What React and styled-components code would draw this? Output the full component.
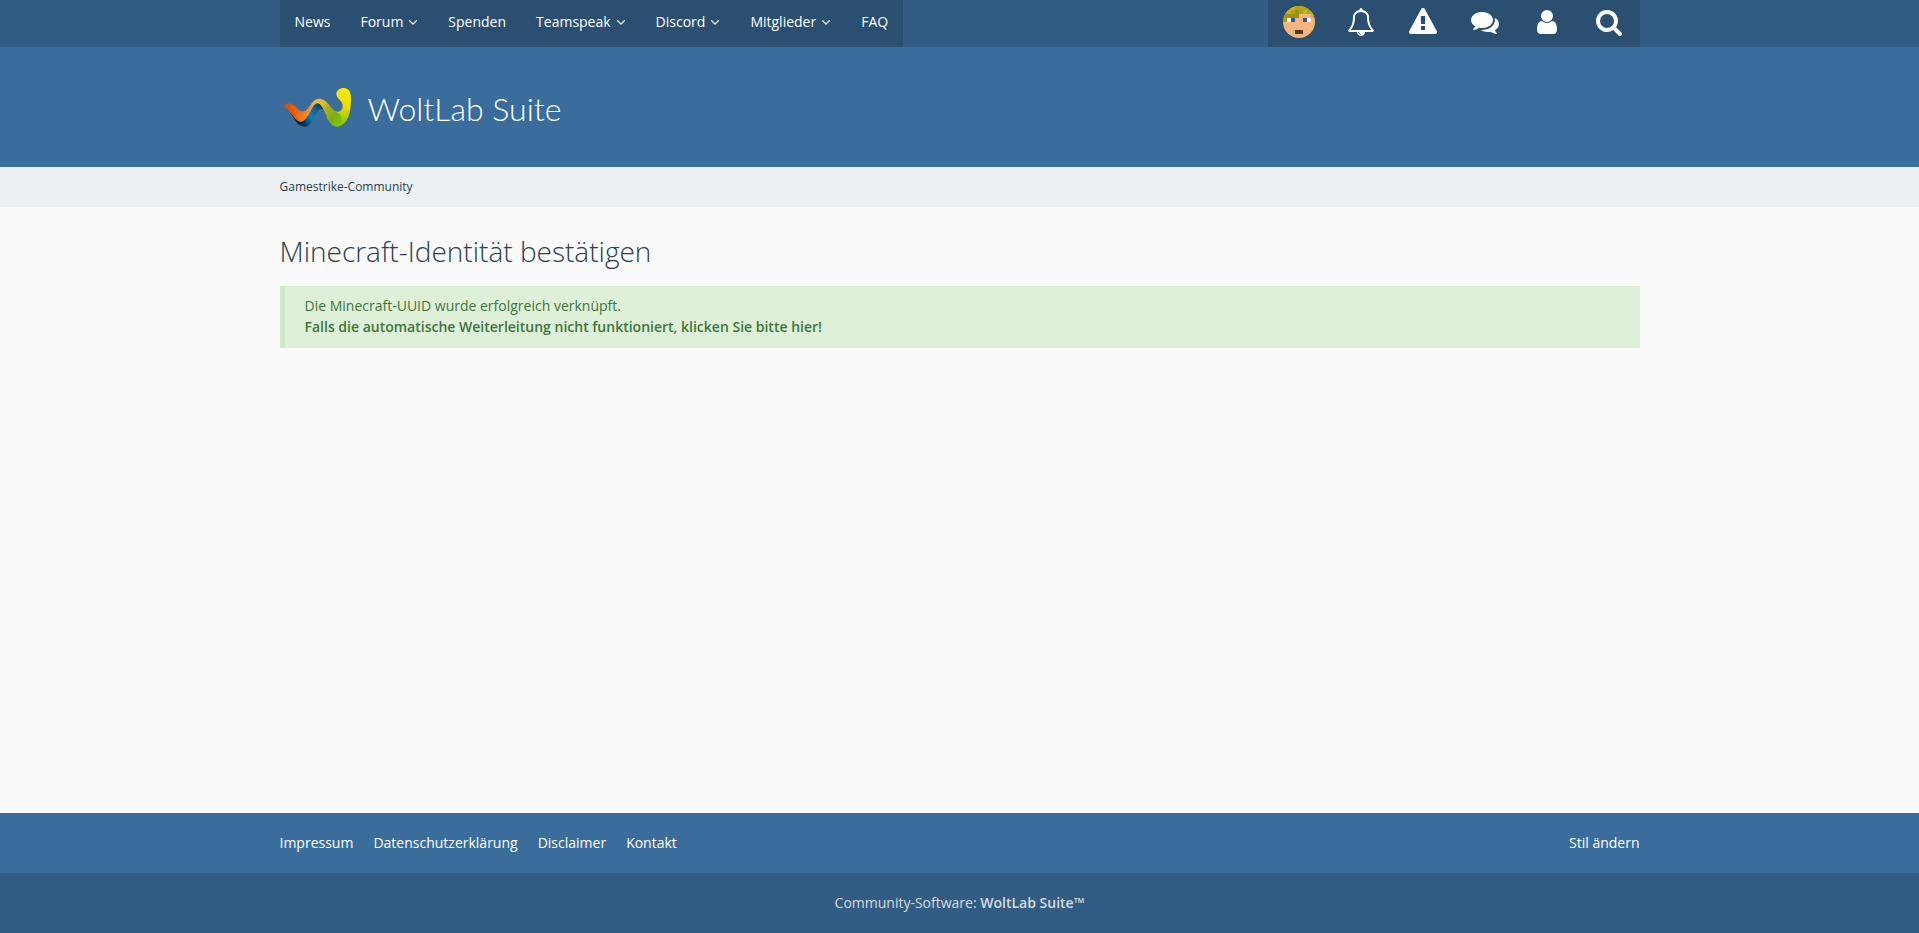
import React from "react";
import styled, { createGlobalStyle } from "styled-components";

const GlobalStyle = createGlobalStyle`
  *, *::before, *::after { box-sizing: border-box; }
  html, body, #root { height: 100%; }
  body {
    margin: 0;
    background: #fafafa;
    color: #2c3e50;
    font-family: "Open Sans", sans-serif;
    font-size: 14px;
    line-height: 21px;
  }
  a { color: inherit; text-decoration: none; }
`;

const Page = styled.div`
  display: flex;
  flex-direction: column;
  min-height: 100%;
`;

const Boundary = styled.div`
  display: flex;
  align-items: center;
  justify-content: ${(p) => p.$justify || "space-between"};
  width: 100%;
  max-width: 1400px;
  margin: 0 auto;
  padding: 0 20px;
`;

const TopBar = styled.div`
  background: #325c84;
`;

const Menu = styled.ul`
  display: flex;
  margin: 0;
  padding: 0;
  list-style: none;
  background: #2b4f71;
`;

const MenuLink = styled.a`
  display: flex;
  align-items: center;
  gap: 5px;
  padding: 11px 15px 15px;
  color: #fff;
  font-weight: 500;
`;

const IconButton = styled.button`
  display: flex;
  align-items: center;
  justify-content: center;
  width: 62px;
  height: 47px;
  padding: 0 0 3px;
  border: 0;
  background: none;
  color: #fff;
  cursor: pointer;
`;

const Glyph = styled.svg`
  display: block;
  flex: none;
  width: ${(p) => p.$size}px;
  height: ${(p) => p.$size}px;
  fill: currentColor;
`;

const Header = styled.header`
  background: #3a6d9c;
  padding: 40px 0;
`;

const Brand = styled.a`
  display: flex;
  align-items: center;
  gap: 13px;
  height: 40px;
  color: #fff;
`;

const BrandName = styled.span`
  padding-top: 4px;
  font-family: Lato, sans-serif;
  font-weight: 300;
  font-size: 32px;
  line-height: 40px;
`;

const Breadcrumbs = styled.nav`
  background: #ecf0f2;
  font-size: 12px;
  line-height: 40px;
`;

const Main = styled.main`
  flex: 1;
  width: 100%;
  max-width: 1400px;
  margin: 0 auto;
  padding: 25px 20px 40px;
`;

const Title = styled.h1`
  margin: 0 0 15px;
  font-size: 28px;
  font-weight: 300;
  line-height: 39px;
`;

const Success = styled.div`
  padding: 9px 20px 11px;
  border-left: 5px solid #d0e9c6;
  background: #dff0d8;
  color: #3c763d;
`;

const StrongLink = styled.a`
  display: block;
  font-weight: 600;
`;

const FooterBar = styled.div`
  padding: 19px 0 20px;
  background: #3a6d9c;
  color: #fff;
  font-weight: 500;
`;

const FooterLinks = styled.nav`
  display: flex;
  gap: 20px;
`;

const StyleButton = styled.button`
  padding: 0;
  border: 0;
  background: none;
  color: inherit;
  font: inherit;
  cursor: pointer;
`;

const Copyright = styled.div`
  padding: 19px 0 20px;
  background: #325c84;
  color: #d9dcde;
  a { font-weight: 600; }
`;

const icons = {
  angle: "M1395 736q0 13-10 23l-466 466q-10 10-23 10t-23-10l-466-466q-10-10-10-23t10-23l50-50q10-10 23-10t23 10l393 393 393-393q10-10 23-10t23 10l50 50q10 10 10 23z",
  bell: "M912 1696q0-16-16-16-59 0-101.5-42.5t-42.5-101.5q0-16-16-16t-16 16q0 73 51.5 124.5t124.5 51.5q16 0 16-16zm-666-288h1300q-266-300-266-832 0-51-24-105t-69-103-121.5-80.5-169.5-31.5-169.5 31.5-121.5 80.5-69 103-24 105q0 532-266 832zm1482 0q0 52-38 90t-90 38h-448q0 106-75 181t-181 75-181-75-75-181h-448q-52 0-90-38t-38-90q50-42 91-88t85-119.5 74.5-158.5 50-206 19.5-260q0-152 117-282.5t307-158.5q-8-19-8-39 0-40 28-68t68-28 68 28 28 68q0 20-8 39 190 28 307 158.5t117 282.5q0 139 19.5 260t50 206 74.5 158.5 85 119.5 91 88z",
  warning: "M1024 1375v-190q0-14-9.5-23.5t-22.5-9.5h-192q-13 0-22.5 9.5t-9.5 23.5v190q0 14 9.5 23.5t22.5 9.5h192q13 0 22.5-9.5t9.5-23.5zm-2-374l18-459q0-12-10-19-13-11-24-11h-220q-11 0-24 11-10 7-10 21l17 457q0 10 10 16.5t24 6.5h185q14 0 23.5-6.5t10.5-16.5zm-14-934l768 1408q35 63-2 126-17 29-46.5 46t-63.5 17h-1536q-34 0-63.5-17t-46.5-46q-37-63-2-126l768-1408q17-31 47-49t65-18 65 18 47 49z",
  comments: "M1408 768q0 139-94 257t-256.5 186.5-353.5 68.5q-86 0-176-16-124 88-278 128-36 9-86 16h-3q-11 0-20.5-8t-11.5-21q-1-3-1-6.5t.5-6.5 2-6l2.5-5 3.5-5.5 4-5 4.5-5 4-4.5q5-6 23-25t26-29.5 22.5-29 25-38.5 20.5-44q-124-72-195-177t-71-224q0-139 94-257t256.5-186.5 353.5-68.5 353.5 68.5 256.5 186.5 94 257zm384 256q0 120-71 224.5t-195 176.5q10 24 20.5 44t25 38.5 22.5 29 26 29.5 23 25q1 1 4 4.5t4.5 5 4 5 3.5 5.5l2.5 5 2 6 .5 6.5-1 6.5q-3 14-13 22t-22 7q-50-7-86-16-154-40-278-128-90 16-176 16-271 0-472-132 58 4 88 4 161 0 309-45t264-129q125-92 192-212t67-254q0-77-23-152 129 71 204 178t75 230z",
  user: "M1536 1399q0 109-62.5 187t-150.5 78h-854q-88 0-150.5-78t-62.5-187q0-85 8.5-160.5t31.5-152 58.5-131 94-89 134.5-34.5q131 128 313 128t313-128q76 0 134.5 34.5t94 89 58.5 131 31.5 152 8.5 160.5zm-256-887q0 159-112.5 271.5t-271.5 112.5-271.5-112.5-112.5-271.5 112.5-271.5 271.5-112.5 271.5 112.5 112.5 271.5z",
  search: "M1216 832q0-185-131.5-316.5t-316.5-131.5-316.5 131.5-131.5 316.5 131.5 316.5 316.5 131.5 316.5-131.5 131.5-316.5zm512 832q0 52-38 90t-90 38q-54 0-90-38l-343-342q-179 124-399 124-143 0-273.5-55.5t-225-150-150-225-55.5-273.5 55.5-273.5 150-225 225-150 273.5-55.5 273.5 55.5 225 150 150 225 55.5 273.5q0 220-124 399l343 343q37 37 37 90z",
};

const Icon = ({ name, size, box = "0 0 1792 1792" }) => (
  <Glyph $size={size} viewBox={box} aria-hidden="true">
    <path d={icons[name]} />
  </Glyph>
);

const Avatar = () => (
  <svg width="32" height="32" viewBox="0 0 32 32" aria-hidden="true">
    <defs>
      <clipPath id="face"><circle cx="16" cy="16" r="16" /></clipPath>
    </defs>
    <g clipPath="url(#face)">
      <rect width="32" height="32" fill="#f2b57b" />
      <rect width="32" height="8" fill="#b0a216" />
      <rect y="8" width="16" height="4" fill="#9c9010" />
      <rect y="12" width="4" height="4" fill="#a99b13" />
      <rect x="4" y="4" width="4" height="4" fill="#c4b61c" />
      <rect x="8" width="4" height="4" fill="#c4b61c" />
      <rect x="12" y="4" width="4" height="4" fill="#9c9010" />
      <rect x="20" y="4" width="4" height="4" fill="#c4b61c" />
      <rect x="28" y="4" width="4" height="8" fill="#c4b61c" />
      <rect x="4" y="12" width="4" height="4" fill="#fff" />
      <rect x="8" y="12" width="4" height="4" fill="#235aa0" />
      <rect x="20" y="12" width="4" height="4" fill="#235aa0" />
      <rect x="24" y="12" width="4" height="4" fill="#fff" />
      <rect x="12" y="24" width="8" height="4" fill="#51392c" />
    </g>
  </svg>
);

const Logo = () => (
  <svg width="75" height="46" viewBox="4 -1 225 138" aria-hidden="true">
    <defs>
      <linearGradient id="blue" gradientUnits="userSpaceOnUse" x1="52" y1="118" x2="130" y2="65">
        <stop offset="0" stopColor="#06182c" />
        <stop offset="0.2" stopColor="#06304f" />
        <stop offset="0.5" stopColor="#0a7fc0" />
        <stop offset="0.75" stopColor="#0967a2" />
        <stop offset="1" stopColor="#07385f" />
      </linearGradient>
      <linearGradient id="orange" gradientUnits="userSpaceOnUse" x1="12" y1="60" x2="122" y2="60">
        <stop offset="0" stopColor="#c94a08" />
        <stop offset="0.3" stopColor="#e65c0a" />
        <stop offset="0.65" stopColor="#f8882a" />
        <stop offset="1" stopColor="#e8bd3c" />
      </linearGradient>
      <linearGradient id="green" gradientUnits="userSpaceOnUse" x1="100" y1="50" x2="185" y2="120">
        <stop offset="0" stopColor="#e9bf45" />
        <stop offset="0.25" stopColor="#dcbf35" />
        <stop offset="0.5" stopColor="#9fae18" />
        <stop offset="0.75" stopColor="#80b10c" />
        <stop offset="1" stopColor="#7fc70a" />
      </linearGradient>
      <linearGradient id="hook" gradientUnits="userSpaceOnUse" x1="205" y1="10" x2="175" y2="126">
        <stop offset="0" stopColor="#f8ea10" />
        <stop offset="0.45" stopColor="#ecdf04" />
        <stop offset="0.75" stopColor="#a8cf08" />
        <stop offset="1" stopColor="#78bf08" />
      </linearGradient>
    </defs>
    <path d="M38 90C50 108 58 127 78 127C100 126 103 102 113 86C120 74 128 68 136 80L128 52L112 50C98 62 90 80 74 96Z" fill="url(#blue)" />
    <path d="M12 67C22 55 36 54 47 64C58 74 67 85 79 80C94 72 98 46 122 43L130 58C116 52 108 58 101 70C92 88 80 113 64 112C44 108 34 69 12 67Z" fill="url(#orange)" />
    <path d="M160 76C186 92 197 72 190 56C185 45 174 42 173 28C174 17 185 11 196 11C211 12 217 24 217 42C217 76 211 121 178 127C160 127 150 110 144 98Z" fill="url(#hook)" />
    <path d="M98 62C104 48 113 43 124 43C148 46 154 73 172 82C186 90 192 100 188 114C185 122 182 127 176 127C148 124 141 76 123 59C114 54 106 56 98 62Z" fill="url(#green)" />
  </svg>
);

const menu = [
  ["News"], ["Forum", true], ["Spenden"], ["Teamspeak", true],
  ["Discord", true], ["Mitglieder", true], ["FAQ"],
];

const tools = [
  ["Benachrichtigungen", "bell"], ["Moderation", "warning"],
  ["Konversationen", "comments"], ["Benutzer", "user"], ["Suche", "search"],
];

export default function App() {
  return (
    <Page>
      <GlobalStyle />
      <TopBar>
        <Boundary>
          <nav>
            <Menu>
              {menu.map(([label, sub]) => (
                <li key={label}>
                  <MenuLink href="#">
                    {label}
                    {sub && <Icon name="angle" size={10} box="276 276 1240 1240" />}
                  </MenuLink>
                </li>
              ))}
            </Menu>
          </nav>
          <Menu>
            <li><IconButton aria-label="Profil"><Avatar /></IconButton></li>
            {tools.map(([label, name]) => (
              <li key={name}>
                <IconButton aria-label={label}><Icon name={name} size={28} /></IconButton>
              </li>
            ))}
          </Menu>
        </Boundary>
      </TopBar>
      <Header>
        <Boundary>
          <Brand href="#"><Logo /><BrandName>WoltLab Suite</BrandName></Brand>
        </Boundary>
      </Header>
      <Breadcrumbs>
        <Boundary><a href="#">Gamestrike-Community</a></Boundary>
      </Breadcrumbs>
      <Main>
        <Title>Minecraft-Identität bestätigen</Title>
        <Success>
          Die Minecraft-UUID wurde erfolgreich verknüpft.
          <StrongLink href="#">Falls die automatische Weiterleitung nicht funktioniert, klicken Sie bitte hier!</StrongLink>
        </Success>
      </Main>
      <footer>
        <FooterBar>
          <Boundary>
            <FooterLinks>
              <a href="#">Impressum</a>
              <a href="#">Datenschutzerklärung</a>
              <a href="#">Disclaimer</a>
              <a href="#">Kontakt</a>
            </FooterLinks>
            <StyleButton>Stil ändern</StyleButton>
          </Boundary>
        </FooterBar>
        <Copyright>
          <Boundary $justify="center">
            <span>Community-Software: <a href="#">WoltLab Suite™</a></span>
          </Boundary>
        </Copyright>
      </footer>
    </Page>
  );
}
